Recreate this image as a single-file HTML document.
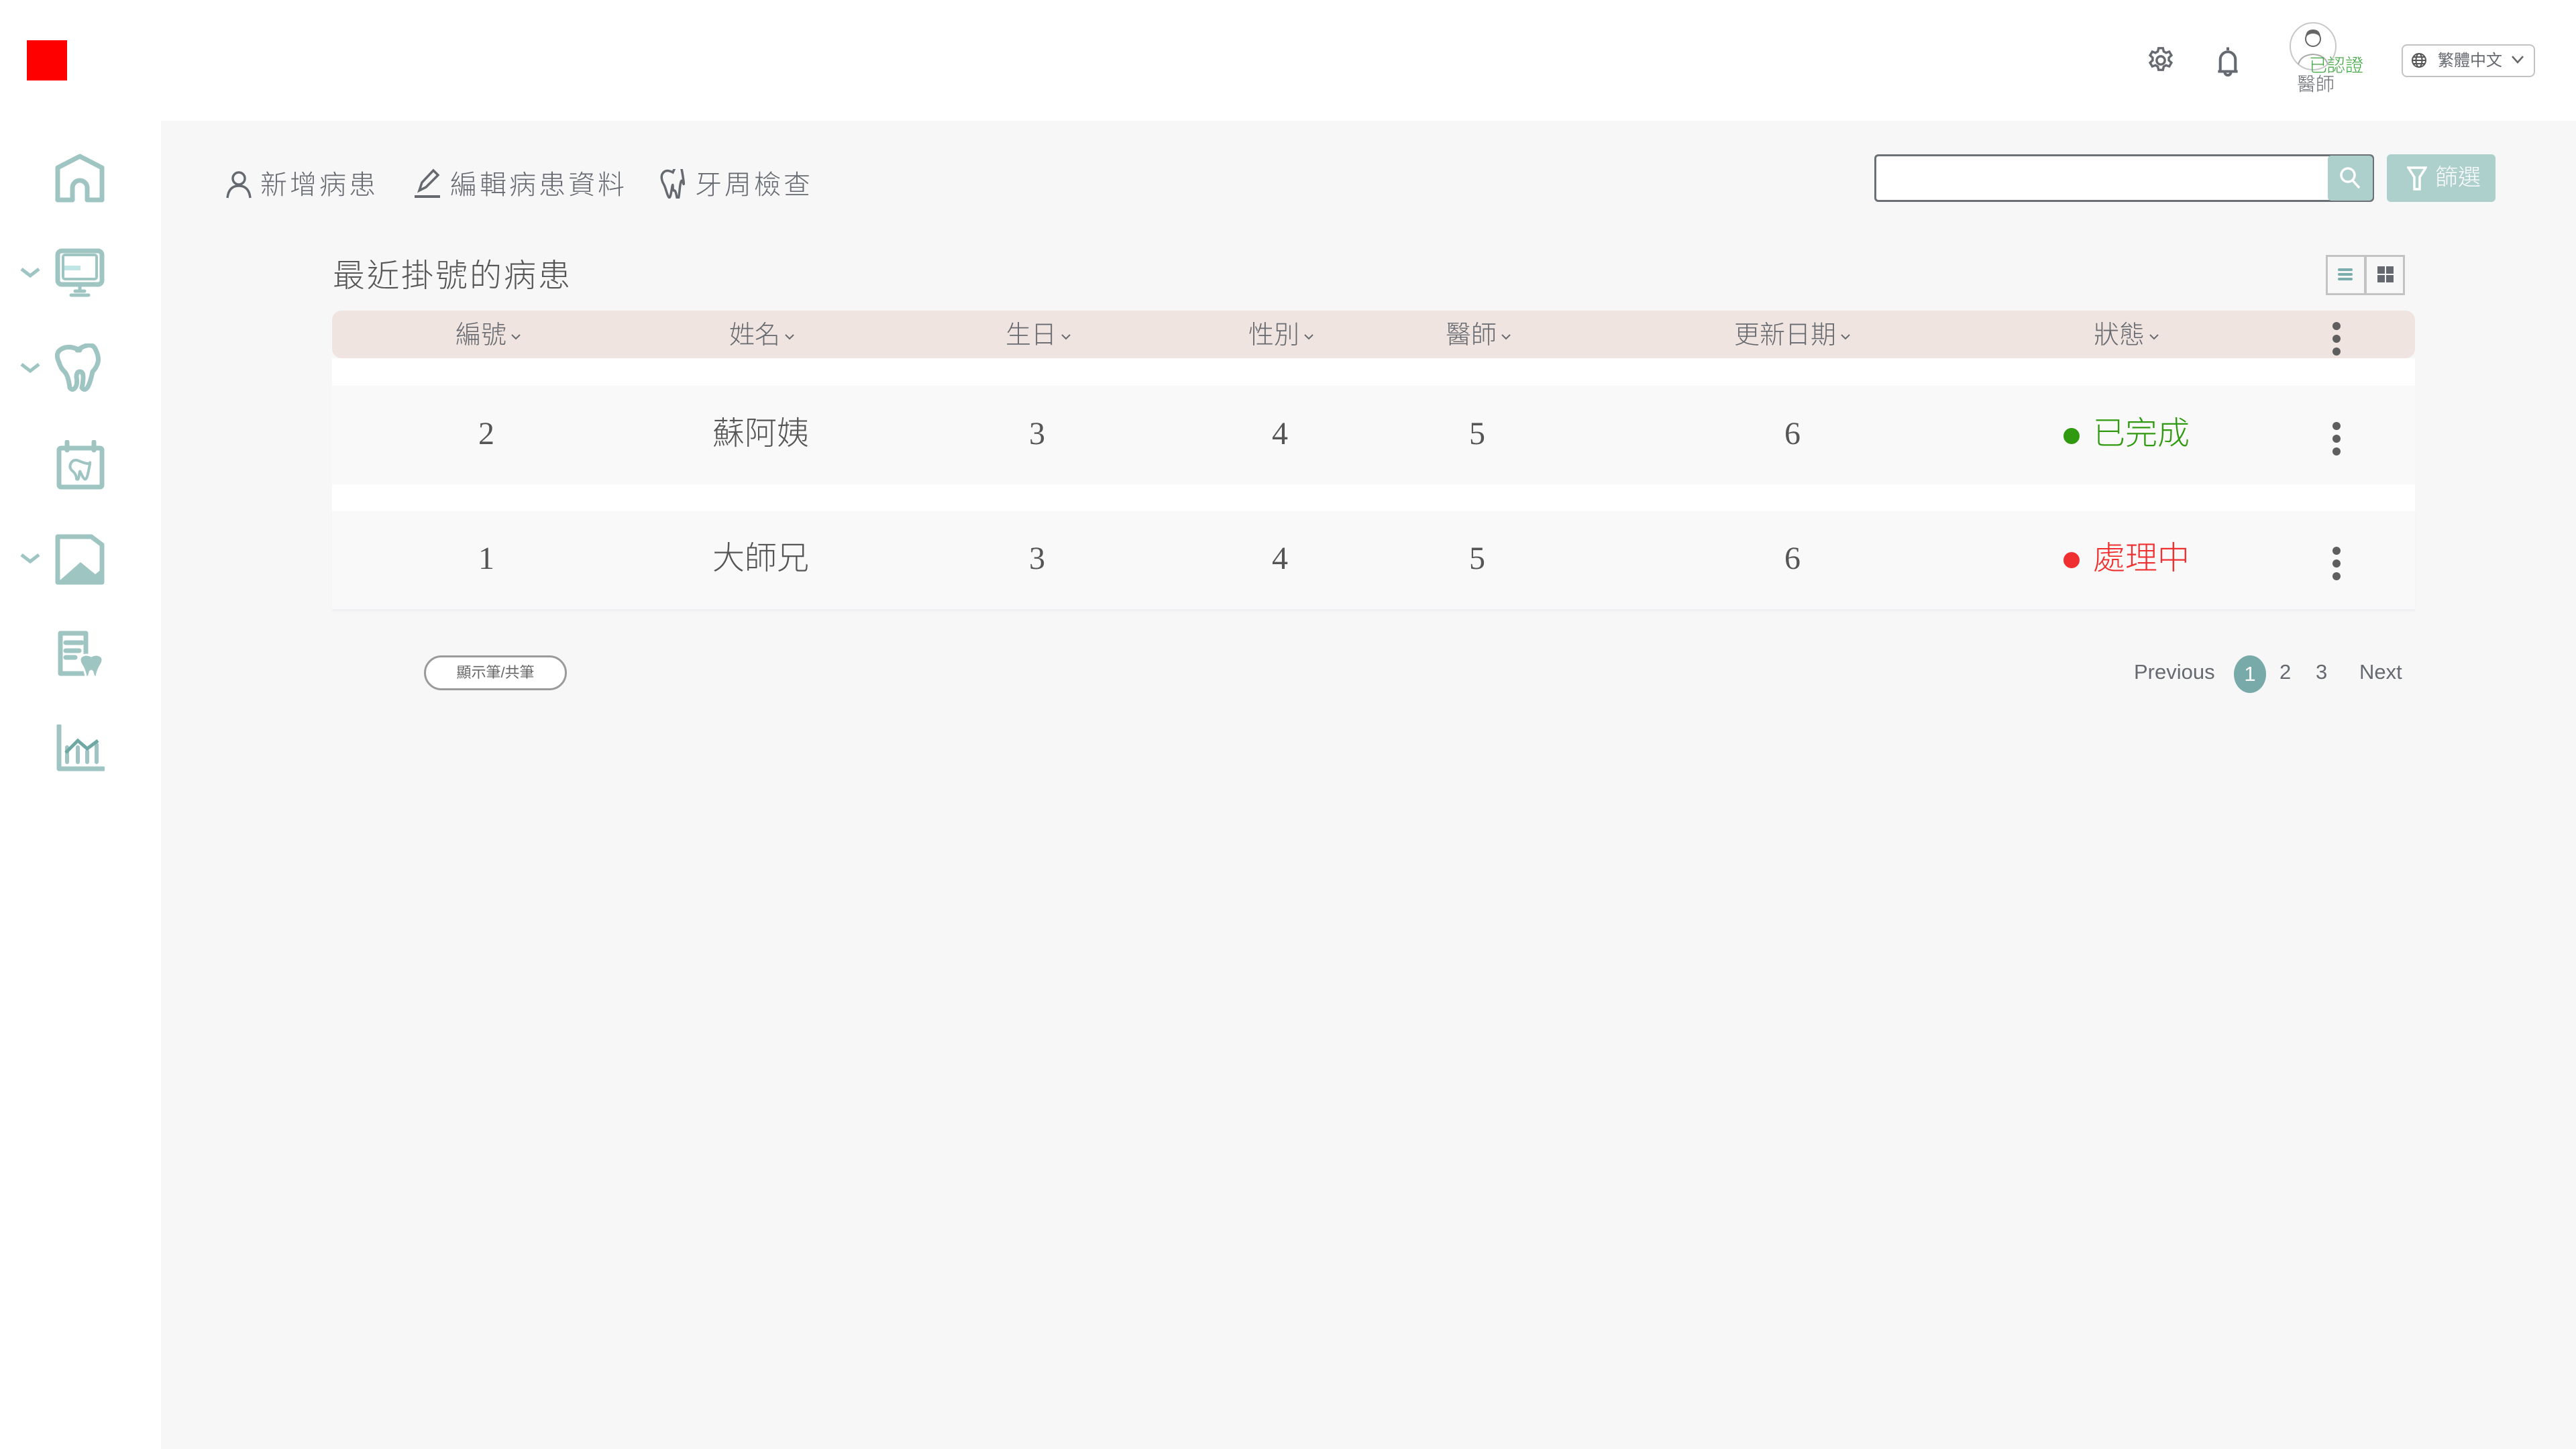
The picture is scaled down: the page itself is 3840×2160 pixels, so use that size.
<!DOCTYPE html>
<html><head><meta charset="utf-8">
<style>
*{margin:0;padding:0;box-sizing:border-box}
body{width:3840px;height:2160px;overflow:hidden;background:#fff;font-family:"Liberation Sans","Noto Sans CJK TC",sans-serif;color:#666a70;position:relative}
.a{position:absolute}
.main{left:240px;top:180px;width:3600px;height:1980px;background:#f7f7f7}
.ic{fill:none;stroke:#9fc5c2;stroke-width:7;stroke-linejoin:round;stroke-linecap:round}
.chev{fill:none;stroke:#9fc5c2;stroke-width:5}
.tb{font-size:40px;letter-spacing:4px;color:#666a70;top:250px;line-height:52px;font-weight:300}
.th{font-size:38px;color:#666a70;top:474px;line-height:52px;transform:translateX(-50%);white-space:nowrap;font-weight:300}
.th svg{display:inline-block;vertical-align:middle;margin-left:6px}
.td{font-family:"Liberation Serif","Noto Sans CJK TC",serif;font-size:48px;color:#555;transform:translateX(-50%);white-space:nowrap;line-height:60px;font-weight:300}
.dots{width:12px}
.dots i{display:block;width:12px;height:12px;border-radius:50%;background:#5f5f5f;margin-bottom:7px}
</style></head><body>
<div class="a" style="left:40px;top:60px;width:60px;height:60px;background:#f00"></div>

<svg class="a" style="left:3198px;top:66px" width="46" height="48" viewBox="0 0 24 24" fill="none" stroke="#666a70" stroke-width="1.8"><circle cx="12" cy="12" r="3.2"/><path d="M10.3 2.5h3.4l.6 2.6 1.8 1 2.5-.9 1.7 2.9-2 1.8v2.1l2 1.8-1.7 2.9-2.5-.9-1.8 1-.6 2.6h-3.4l-.6-2.6-1.8-1-2.5.9-1.7-2.9 2-1.8v-2.1l-2-1.8 1.7-2.9 2.5.9 1.8-1z"/></svg>
<svg class="a" style="left:3302px;top:66px" width="38" height="54" viewBox="0 0 16 24" fill="none" stroke="#666a70" stroke-width="1.8"><path d="M8 2v2M3 18V10a5 5 0 0 1 10 0v8M1.5 18h13M6 18.5a2 2 0 0 0 4 0"/></svg>
<svg class="a" style="left:3412px;top:32px" width="72" height="74" viewBox="0 0 72 74"><ellipse cx="36" cy="37" rx="34" ry="35" fill="#fff" stroke="#c8c8c8" stroke-width="2"/><circle cx="36" cy="26" r="11" fill="#fff" stroke="#666" stroke-width="2"/><path d="M25 24q0-12 11-12t11 12q-4-6-11-6t-11 6z" fill="#666"/><path d="M14 64q4-14 22-15 18 1 22 15" fill="none" stroke="#aaa" stroke-width="2"/></svg>
<div class="a" style="left:3442px;top:82px;font-size:27px;color:#3aa53a;line-height:32px;font-weight:300">已認證</div>
<div class="a" style="left:3424px;top:110px;font-size:28px;color:#666a70;line-height:32px;font-weight:300">醫師</div>
<div class="a" style="left:3580px;top:66px;width:199px;height:49px;border:2px solid #c3c3c3;border-radius:8px;background:#fff;font-size:24px;line-height:45px;padding-left:52px;color:#666a70">繁體中文</div>
<svg class="a" style="left:3594px;top:78px" width="24" height="24" viewBox="0 0 24 24" fill="none" stroke="#555" stroke-width="2"><circle cx="12" cy="12" r="10"/><ellipse cx="12" cy="12" rx="4.5" ry="10"/><path d="M2 12h20M4 7h16M4 17h16"/></svg>
<svg class="a" style="left:3743px;top:82px" width="20" height="14" viewBox="0 0 20 14" fill="none" stroke="#666" stroke-width="2.5"><path d="M2 2l8 9 8-9"/></svg>

<svg class="a" style="left:82px;top:228px" width="74" height="76" viewBox="0 0 74 76"><path class="ic" d="M4 70V22L37 5l33 17v48H48V52a11 11 0 0 0-22 0v18z"/></svg>
<svg class="a chev" style="left:30px;top:398px" width="30" height="16" viewBox="0 0 30 16"><path d="M2 3l13 10 13-10"/></svg>
<svg class="a" style="left:82px;top:370px" width="74" height="76" viewBox="0 0 74 76"><rect class="ic" x="4" y="4" width="66" height="50" rx="6"/><rect class="ic" x="12" y="10" width="50" height="36" rx="3" style="stroke-width:4"/><rect x="14" y="26" width="24" height="7" fill="#bfe5e5"/><path class="ic" d="M37 55v8M24 70h26M30 64h14" style="stroke-width:5"/></svg>
<svg class="a chev" style="left:30px;top:540px" width="30" height="16" viewBox="0 0 30 16"><path d="M2 3l13 10 13-10"/></svg>
<svg class="a" style="left:82px;top:512px" width="74" height="76" viewBox="0 0 74 76"><path class="ic" d="M37 10q-16-8-27-2T6 28q2 8 8 14t8 24q4 5 8 0t2-16q0-8 5-8t5 8-2 16q4 5 8 0t8-24q6-6 8-14t-4-20-27 2z"/></svg>
<svg class="a" style="left:84px;top:656px" width="72" height="76" viewBox="0 0 72 76"><rect class="ic" x="4" y="12" width="64" height="58" rx="3"/><path class="ic" d="M16 3v12M56 3v12"/><path class="ic" style="stroke-width:4" d="M36 32q-10-5-14 2t2 12 6 12q3 3 4-6t2-3q1 0 2 3t4 6 6-12 2-12-14-2z"/></svg>
<svg class="a chev" style="left:30px;top:824px" width="30" height="16" viewBox="0 0 30 16"><path d="M2 3l13 10 13-10"/></svg>
<svg class="a" style="left:82px;top:796px" width="74" height="76" viewBox="0 0 74 76"><path class="ic" d="M4 4h50l16 12v56H4z"/><path d="M4 72l34-30 22 18 10-8v20z" fill="#9fc5c2"/></svg>
<svg class="a" style="left:84px;top:940px" width="72" height="72" viewBox="0 0 72 72"><path class="ic" d="M6 4h38v60H6z"/><path class="ic" d="M14 18h24M14 30h20M14 40h14"/><path d="M52 38q-8-4-14 0t0 14q4 6 6 16 4 4 6-6 2-4 4 0 2 10 6 6 2-10 6-16 6-10 0-14t-14 0z" fill="#9fc5c2" stroke="#fff" stroke-width="3"/></svg>
<svg class="a" style="left:84px;top:1080px" width="72" height="70" viewBox="0 0 72 70"><path class="ic" d="M4 2v64h66"/><path class="ic" d="M16 34v22M32 34v22M46 40v16M60 30v26" style="stroke-width:6"/><path d="M14 42l18-18 14 12 16-12" fill="none" stroke="#6ea8a4" stroke-width="5"/></svg>

<div class="a main"></div>

<svg class="a" style="left:336px;top:254px" width="40" height="42" viewBox="0 0 40 42" fill="none" stroke="#666a70" stroke-width="3.5"><circle cx="20" cy="12" r="9"/><path d="M3 41q2-18 17-18t17 18"/></svg>
<div class="a tb" style="left:388px">新增病患</div>
<svg class="a" style="left:616px;top:250px" width="42" height="46" viewBox="0 0 42 46" fill="none" stroke="#666a70" stroke-width="3.5"><path d="M9 34l4-12L30 4l7 7-18 18z"/><path d="M2 43h38" stroke-width="4"/></svg>
<div class="a tb" style="left:671px">編輯病患資料</div>
<svg class="a" style="left:984px;top:252px" width="38" height="44" viewBox="0 0 38 44" fill="none" stroke="#666a70" stroke-width="3.5"><path d="M19 5q-9-5-14 0T4 20q3 5 5 12t4 10 4-10 2-6 2 6 4 10 4-10 5-12-1-15-14 0z"/></svg>
<div class="a tb" style="left:1036px">牙周檢查</div>

<div class="a" style="left:2794px;top:230px;width:745px;height:71px;background:#fff;border:3px solid #6b6f76;border-radius:6px"></div>
<div class="a" style="left:3470px;top:232px;width:67px;height:67px;background:#aed0cd;border-radius:5px"></div>
<svg class="a" style="left:3487px;top:248px" width="34" height="36" viewBox="0 0 34 36" fill="none" stroke="#fff" stroke-width="3.5"><circle cx="13" cy="13" r="10"/><path d="M20 21l10 11"/></svg>
<div class="a" style="left:3558px;top:230px;width:162px;height:71px;background:#aed0cd;border-radius:6px;color:#fff;font-size:34px;line-height:71px;padding-left:72px;font-weight:300">篩選</div>
<svg class="a" style="left:3588px;top:248px" width="30" height="36" viewBox="0 0 30 36" fill="none" stroke="#fff" stroke-width="3.5"><path d="M2 2h26l-9 14v18h-8V16z"/></svg>

<div class="a" style="left:496px;top:382px;font-size:48px;color:#555;letter-spacing:3px;line-height:60px;font-weight:300">最近掛號的病患</div>
<div class="a" style="left:3467px;top:380px;width:118px;height:60px;border:3px solid #c3c3c3;background:#f7f7f7"></div>
<div class="a" style="left:3524px;top:380px;width:4px;height:60px;background:#c3c3c3"></div>
<div class="a" style="left:3485px;top:400px;width:22px;height:4px;background:#7aadab;box-shadow:0 7px 0 #7aadab,0 14px 0 #7aadab;border-radius:2px"></div>
<div class="a" style="left:3544px;top:397px;width:11px;height:11px;background:#666a70;box-shadow:13px 0 0 #666a70,0 13px 0 #666a70,13px 13px 0 #666a70"></div>

<div class="a" style="left:495px;top:463px;width:3105px;height:71px;background:#efe4df;border-radius:14px"></div>
<div class="a" style="left:495px;top:534px;width:3105px;height:41px;background:#fff"></div>
<div class="a" style="left:495px;top:575px;width:3105px;height:147px;background:#f9f9f9"></div>
<div class="a" style="left:495px;top:722px;width:3105px;height:40px;background:#fff"></div>
<div class="a" style="left:495px;top:762px;width:3105px;height:146px;background:#f9f9f9;box-shadow:0 3px 3px #eeeef2"></div>

<div class="a th" style="left:728px">編號<svg width="16" height="12" viewBox="0 0 16 12" fill="none" stroke="#666a70" stroke-width="2"><path d="M2 3l6 6 6-6"/></svg></div>
<div class="a th" style="left:1136px">姓名<svg width="16" height="12" viewBox="0 0 16 12" fill="none" stroke="#666a70" stroke-width="2"><path d="M2 3l6 6 6-6"/></svg></div>
<div class="a th" style="left:1548px">生日<svg width="16" height="12" viewBox="0 0 16 12" fill="none" stroke="#666a70" stroke-width="2"><path d="M2 3l6 6 6-6"/></svg></div>
<div class="a th" style="left:1910px">性別<svg width="16" height="12" viewBox="0 0 16 12" fill="none" stroke="#666a70" stroke-width="2"><path d="M2 3l6 6 6-6"/></svg></div>
<div class="a th" style="left:2204px">醫師<svg width="16" height="12" viewBox="0 0 16 12" fill="none" stroke="#666a70" stroke-width="2"><path d="M2 3l6 6 6-6"/></svg></div>
<div class="a th" style="left:2672px">更新日期<svg width="16" height="12" viewBox="0 0 16 12" fill="none" stroke="#666a70" stroke-width="2"><path d="M2 3l6 6 6-6"/></svg></div>
<div class="a th" style="left:3170px">狀態<svg width="16" height="12" viewBox="0 0 16 12" fill="none" stroke="#666a70" stroke-width="2"><path d="M2 3l6 6 6-6"/></svg></div>
<div class="a dots" style="left:3477px;top:480px"><i></i><i></i><i></i></div>

<div class="a td" style="left:725px;top:617px">2</div>
<div class="a td" style="left:1134px;top:617px">蘇阿姨</div>
<div class="a td" style="left:1546px;top:617px">3</div>
<div class="a td" style="left:1908px;top:617px">4</div>
<div class="a td" style="left:2202px;top:617px">5</div>
<div class="a td" style="left:2672px;top:617px">6</div>
<div class="a" style="left:3076px;top:638px;width:24px;height:24px;border-radius:50%;background:#2f9a0f"></div>
<div class="a" style="left:3120px;top:617px;font-size:48px;line-height:60px;color:#2f9a0f;font-weight:300">已完成</div>
<div class="a dots" style="left:3477px;top:629px"><i></i><i></i><i></i></div>

<div class="a td" style="left:725px;top:803px">1</div>
<div class="a td" style="left:1134px;top:803px">大師兄</div>
<div class="a td" style="left:1546px;top:803px">3</div>
<div class="a td" style="left:1908px;top:803px">4</div>
<div class="a td" style="left:2202px;top:803px">5</div>
<div class="a td" style="left:2672px;top:803px">6</div>
<div class="a" style="left:3076px;top:823px;width:24px;height:24px;border-radius:50%;background:#f03030"></div>
<div class="a" style="left:3120px;top:803px;font-size:48px;line-height:60px;color:#f03030;font-weight:300">處理中</div>
<div class="a dots" style="left:3477px;top:815px"><i></i><i></i><i></i></div>

<div class="a" style="left:632px;top:977px;width:213px;height:52px;border:3px solid #9a9a9a;border-radius:26px;background:#fff;font-size:22px;line-height:46px;text-align:center;color:#666">顯示筆/共筆</div>
<div class="a" style="left:3181px;top:982px;font-size:31px;line-height:40px;color:#666a70">Previous</div>
<div class="a" style="left:3330px;top:977px;width:48px;height:56px;border-radius:50%;background:#78aaa9;color:#fff;font-size:31px;line-height:56px;text-align:center">1</div>
<div class="a" style="left:3398px;top:982px;font-size:31px;line-height:40px">2</div>
<div class="a" style="left:3452px;top:982px;font-size:31px;line-height:40px">3</div>
<div class="a" style="left:3517px;top:982px;font-size:31px;line-height:40px">Next</div>
</body></html>
